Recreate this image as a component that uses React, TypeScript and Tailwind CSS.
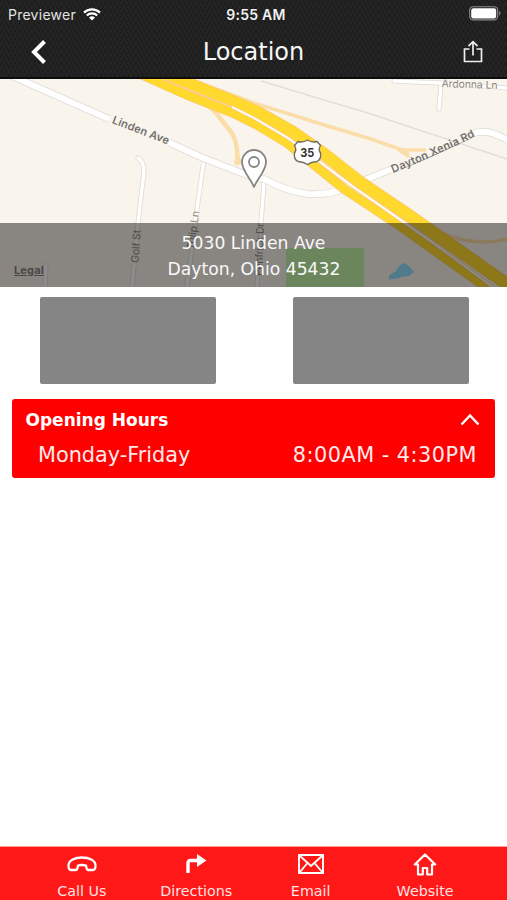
import React from 'react';

const Header: React.FC = () => (
  <header className="h-[79px] border-b-2 border-[#0c0c0c] bg-[#242424] bg-[repeating-linear-gradient(60deg,#00000030_0_1px,transparent_1px_4px),repeating-linear-gradient(-60deg,#00000028_0_1px,transparent_1px_4px)] text-white">
    <div className="grid h-7 grid-cols-3 items-center pl-2 pr-[6px] font-['Inter',sans-serif]">
      <div className="flex items-center gap-[7px]">
        <span className="text-[14px] tracking-[0.250px] text-[#e2e2e2]">Previewer</span>
        <svg width="18" height="13" viewBox="0 0 18 13" fill="none" stroke="#fff" strokeWidth="2.2">
          <path d="M1 4.6a11.4 11.4 0 0 1 16 0M3.8 7.5a7.4 7.4 0 0 1 10.4 0" />
          <path d="M9 12.6 6 9.6a4.3 4.3 0 0 1 6 0z" fill="#fff" stroke="none" />
        </svg>
      </div>
      <span className="pl-[3px] text-center text-[14px] font-semibold tracking-[0.250px] text-[#f2f2f2]">9:55 AM</span>
      <svg className="mb-[2px] justify-self-end" width="32" height="15" viewBox="0 0 32 15">
        <rect x="0.7" y="0.7" width="28" height="13.2" rx="3.6" fill="none" stroke="#8d8d8d" strokeWidth="1.1" />
        <rect x="2.2" y="2.2" width="25" height="10.2" rx="2.2" fill="#fff" />
        <path d="M30.2 5v4.6c1.8-.8 1.8-3.8 0-4.6z" fill="#8d8d8d" />
      </svg>
    </div>
    <div className="grid h-[49px] grid-cols-[60px_1fr_60px] items-center">
      <svg className="mb-[2px] ml-[29px]" width="18" height="26" viewBox="0 0 18 26" fill="none" stroke="#fff" strokeWidth="4">
        <path d="M15.500 2.500 5 13l10.500 10.500" />
      </svg>
      <h1 className="pb-[2px] text-center font-['DejaVu_Sans',sans-serif] text-[24px] leading-7 text-[#f6f6f6]">Location</h1>
      <svg className="mb-[2px] ml-[16px]" width="20" height="24" viewBox="0 0 20 24" fill="none" stroke="#eee" strokeWidth="1.7">
        <path d="M6.500 9H1.500v12.500h17V9h-5M10 15.500V2M5.500 6.200 10 1.700l4.500 4.500" />
      </svg>
    </div>
  </header>
);

const StreetMap: React.FC = () => (
  <svg className="block h-[208px] w-full" viewBox="0 79 507 208" fill="none" strokeLinejoin="round" fontFamily="Inter, sans-serif">
    <rect y="79" width="507" height="208" fill="#f9f5ed" />
    <path d="M286 248h78v39h-78z" fill="#c4f5a8" />
    <path d="M389 279.500v-4l7-4.500 4-6 5-2 5 4 4 5-5 4-6 .5-5 2z" fill="#92e0fb" />
    <path d="M261 81 371 114l136 45" stroke="#e2dfd8" strokeWidth="1.500" />

    {/* Side streets */}
    <g strokeLinecap="round">
      <path d="M138 158q6 4 6 13l-6 52-6 64M204 159l-7 50-10 78M264 183l-3 40-4 64M46 264l-1 23M394 81l47 2 66 5M441 85l-2 24" stroke="#dedad3" strokeWidth="5" />
      <path d="M138 158q6 4 6 13l-6 52-6 64M204 159l-7 50-10 78M264 183l-3 40-4 64M46 264l-1 23M394 81l47 2 66 5M441 85l-2 24" stroke="#fff" strokeWidth="3.400" />
    </g>

    {/* Ramps */}
    <g stroke="#fbdda9" strokeWidth="3.500">
      <path d="M184 95q24 8 32 18l16 20q7 13 5 32" strokeWidth="4.500" />
      <path d="M189 79l65 24 67 21 50 15 31 11h24M398 149l10 7-1-5" />
      <path d="M414 218q30 22 67 24 16 0 26-3" />
    </g>
    <path d="M237 147l-3 17h8z" fill="#fbdda9" />

    {/* Linden Ave and Dayton Xenia Rd, open where the names stand */}
    <path d="M12 76 109 119M168 142l35 16 44 17q10 3 17 4 25 13 44 15 16 1 30-3l49-20 6-2M474 133q6-2 14-1 8 2 20 8" stroke="#dedad3" strokeWidth="7.500" />
    <path d="M12 76 109 119M168 142l35 16 44 17q10 3 17 4 25 13 44 15 16 1 30-3l49-20 6-2M474 133q6-2 14-1 8 2 20 8" stroke="#fff" strokeWidth="6" />

    {/* US 35 */}
    <path d="M140 74 187 95l46 18 24 12 30 18 57 46 53 35 90 64" stroke="#fbc96a" strokeWidth="9.500" />
    <path d="M165 74l62 25 30 13 37 21 30 21 37 29 53 36 97 68" stroke="#fbc96a" strokeWidth="13" />
    <path d="M140 74 187 95l46 18 24 12 30 18 57 46 53 35 90 64" stroke="#ffd92e" strokeWidth="8" />
    <path d="M165 74l62 25 30 13 37 21 30 21 37 29 53 36 97 68" stroke="#ffd92e" strokeWidth="11.500" />
    <path d="M162 79l70 28" stroke="#fbcf96" strokeWidth="1.400" />
    <path d="M232 107l22 11 34 20 64 48 33 23 54 38 54 40" stroke="#fbc678" strokeWidth="3.600" />
    <path d="M232 107l22 11 34 20 64 48 33 23 54 38 54 40" stroke="#fffaf0" strokeWidth="2.200" />

    {/* Street labels */}
    <g fontSize="11" fontWeight="600" fill="#72706d">
      <text transform="translate(111.500 123) rotate(21)" textLength="60">Linden Ave</text>
      <path id="xenia" d="M393 173q44-18 83-37" />
      <text><textPath href="#xenia" textLength="90">Dayton Xenia Rd</textPath></text>
    </g>
    <g fontSize="10.500" fill="#8c8984" stroke="#f9f5ed" strokeWidth="2" paintOrder="stroke">
      <text transform="translate(441.500 87) rotate(2)" textLength="56">Ardonna Ln</text>
      <text transform="translate(138.500 263) rotate(-86)" textLength="33">Golf St</text>
      <text transform="translate(194 250) rotate(-82)" textLength="39">Tulip Ln</text>
      <text transform="translate(262 276) rotate(-88)" textLength="53">Penfrick Dr</text>
    </g>

    {/* Route shield */}
    <path d="M298 141.500q5 1.500 9.500-1.500 4.500 3 9.500 1.500l3.500 4q-2.500 4 0 7.500 1 6-3.500 8.500-6 .5-9.500 3-3.500-2.500-9.500-3-4.500-2.500-3.500-8.500 2.500-3.500 0-7.500z" fill="#fff" stroke="#716d65" strokeWidth="1.400" />
    <text x="307.300" y="157" fontSize="12" fontWeight="700" textAnchor="middle" textLength="14" lengthAdjust="spacingAndGlyphs" fill="#333">35</text>

    {/* Location pin */}
    <path d="M254 187c-3-8-12-16-12-25a12 12 0 0 1 24 0c0 9-9 17-12 25z" fill="#fff" stroke="#858585" strokeWidth="1.800" />
    <circle cx="254" cy="162" r="5" stroke="#858585" strokeWidth="1.800" />
  </svg>
);

const CallIcon = () => (
  <svg width="30" height="18" viewBox="0 0 30 18" fill="none" stroke="#fff" strokeWidth="2.300" strokeLinejoin="round">
    <path d="M1.500 10.500C1.500 5 8 2.500 15 2.500S28.500 5 28.500 10.500q0 4.500-2.500 4.500h-4.500q-2 0-2.500-4.500-4-1-8 0-.5 4.500-2.500 4.500H4q-2.500 0-2.500-4.500z" />
  </svg>
);

const DirectionsIcon = () => (
  <svg width="22" height="20" viewBox="0 0 22 20">
    <path d="M3 19V9q0-2.500 2.500-2.500h8" fill="none" stroke="#fff" strokeWidth="3.400" />
    <path d="M12 0 21.500 6.500 12 13z" fill="#fff" />
  </svg>
);

const EmailIcon = () => (
  <svg width="26" height="20" viewBox="0 0 26 20" fill="none" stroke="#fff" strokeWidth="1.900">
    <path d="M1 1h24v18H1zM1.500 1.500 13 12 24.500 1.500M1.500 18.500 9.500 9M24.500 18.500 16.500 9" />
  </svg>
);

const WebsiteIcon = () => (
  <svg width="24" height="23" viewBox="0 0 24 23" fill="none" stroke="#fff" strokeWidth="2.200" strokeLinejoin="round">
    <path d="M12 1.500 1.800 11.500H5V21.500h4.800V15h4.400v6.500H19V11.500h3.200z" />
  </svg>
);

const tabs = [
  { label: 'Call Us', icon: <CallIcon /> },
  { label: 'Directions', icon: <DirectionsIcon /> },
  { label: 'Email', icon: <EmailIcon /> },
  { label: 'Website', icon: <WebsiteIcon /> },
];

const App: React.FC = () => {
  return (
    <div className="flex h-[900px] w-[507px] flex-col overflow-hidden bg-white font-['DejaVu_Sans',sans-serif]">
      <Header />

      {/* Map with the address on top of it */}
      <div className="relative h-[208px]">
        <StreetMap />
        <div className="absolute inset-x-0 bottom-0 h-16 bg-black/45 pt-[8px] text-center text-[17.200px] leading-[25.500px] text-[#f8f8f8]">
          <p>5030 Linden Ave</p>
          <p className="pl-px">Dayton, Ohio 45432</p>
          <span className="absolute bottom-[10px] left-[14px] font-['Inter',sans-serif] text-[11px] leading-[14px] font-bold tracking-[0.150px] text-[#484846] underline">Legal</span>
        </div>
      </div>

      <div className="mt-[10px] flex justify-between pl-[39.500px] pr-[38.500px]">
        <div className="h-[87px] w-[176px] rounded-[2px] bg-[#858585]" />
        <div className="h-[87px] w-[176px] rounded-[2px] bg-[#858585]" />
      </div>

      {/* Opening hours */}
      <section className="mx-3 mt-[14.500px] h-[79.500px] rounded-[3px] bg-[#ff0000] text-white">
        <div className="flex h-[42px] items-center justify-between pl-[13.500px] pr-[15px]">
          <h2 className="pt-[2px] text-[17px] font-bold">Opening Hours</h2>
          <svg width="20" height="13" viewBox="0 0 20 13" fill="none" stroke="#fff" strokeWidth="2.400">
            <path d="M1.500 11.500 10 2.500l8.500 9" />
          </svg>
        </div>
        <div className="flex justify-between pl-[26px] pr-[18px] text-[20.800px] leading-[28px] text-[#ffeaea]">
          <span>Monday-Friday</span>
          <span className="tracking-[0.500px]">8:00AM - 4:30PM</span>
        </div>
      </section>

      <nav className="mt-auto flex h-[54.500px] justify-center border-t border-[#ff9c9c] bg-[#ff1818]">
        {tabs.map((tab) => (
          <div key={tab.label} className="flex w-[114.400px] flex-col items-center text-[14.300px] leading-[18px] text-[#ffe2e2]">
            <div className="flex h-[35px] items-center justify-center">{tab.icon}</div>
            <span>{tab.label}</span>
          </div>
        ))}
      </nav>
    </div>
  );
};

export default App;
